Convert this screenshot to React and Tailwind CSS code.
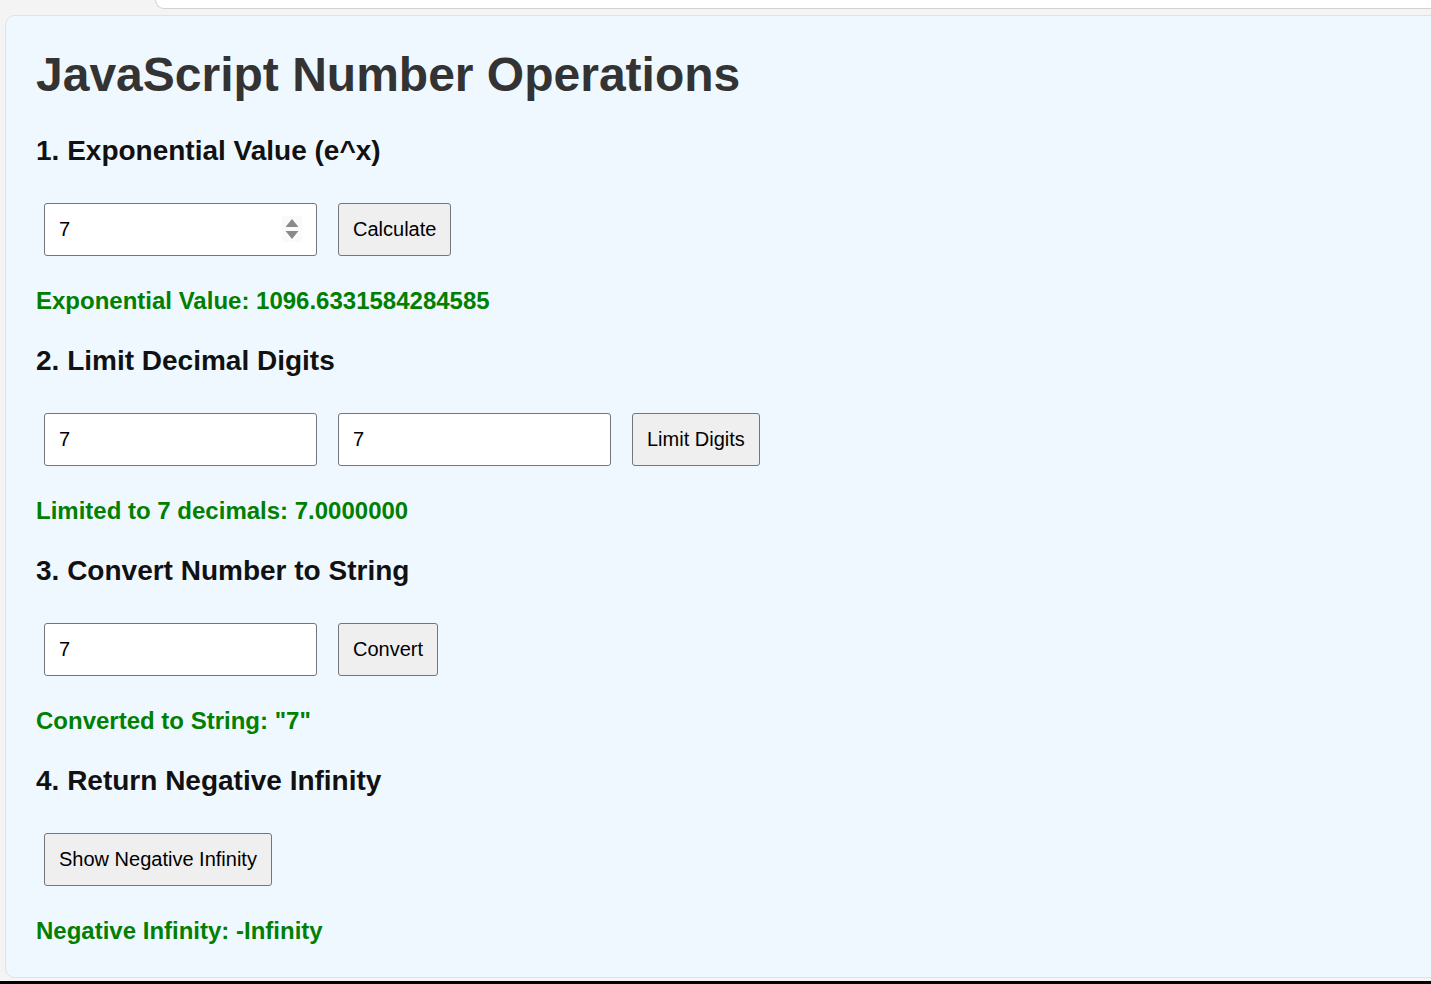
import React, { useState } from "react";

// Number ops demo card, rendered at the reference's 150% look
const Spinner = () => (
  <svg
    className="absolute right-[15px] top-[13px]"
    width="20"
    height="26"
    viewBox="0 0 20 26"
  >
    <rect x="0" y="0" width="20" height="26" fill="#fafafa" />
    <path d="M10 3 L16.5 11 L3.5 11 Z" fill="#8a8a8a" />
    <path d="M10 23 L16.5 15 L3.5 15 Z" fill="#8a8a8a" />
  </svg>
);

const Field = ({ value, onChange, spinner }) => (
  <div className="relative">
    <input
      type="text"
      value={value}
      onChange={(e) => onChange(e.target.value)}
      className="w-[273px] h-[53px] bg-white border border-[#767676] rounded-[3px] px-[14px] text-[20px] leading-[23px] text-black outline-none"
    />
    {spinner && <Spinner />}
  </div>
);

const Btn = ({ children, onClick }) => (
  <button
    onClick={onClick}
    className="h-[53px] bg-[#efefef] border border-[#767676] rounded-[3px] px-[14px] text-[20px] leading-[23px] text-black"
  >
    {children}
  </button>
);

const Heading = ({ children }) => (
  <h3 className="text-[28px] leading-[32px] font-bold text-[#111] mb-[36px]">{children}</h3>
);

const Result = ({ children }) => (
  <p className="text-[24px] leading-[28px] font-bold text-[#008000] mb-[30px]">{children}</p>
);

const Row = ({ children }) => (
  <div className="flex items-center gap-[21px] ml-[8px] mb-[31px]">{children}</div>
);

export default function App() {
  const [expIn, setExpIn] = useState("7");
  const [expOut, setExpOut] = useState(Math.exp(7));
  const [num, setNum] = useState("7");
  const [digits, setDigits] = useState("7");
  const [limited, setLimited] = useState({ d: 7, v: (7).toFixed(7) });
  const [convIn, setConvIn] = useState("7");
  const [convOut, setConvOut] = useState("7");
  const [negInf, setNegInf] = useState(-Infinity);

  return (
    <div
      className="w-[1431px] h-[984px] overflow-hidden bg-[#f4f4f4] flex flex-col"
      style={{ fontFamily: '"Liberation Sans", Arial, sans-serif' }}
    >
      {/* browser chrome leftover at the top */}
      <div className="h-[9px] shrink-0 flex">
        <div className="ml-[155px] flex-1 bg-white border-b border-l border-[#d2d2d2] rounded-bl-[16px]"></div>
      </div>

      <div className="mt-[6px] ml-[5px] w-[1460px] h-[963px] shrink-0 bg-[#f0f8ff] border border-[#e2e2e2] rounded-[10px] pt-[31px] pl-[30px] pr-[31px]">
        <h1 className="text-[48px] leading-[56px] font-bold text-[#333] mb-[32px]">
          JavaScript Number Operations
        </h1>

        <Heading>1. Exponential Value (e^x)</Heading>
        <Row>
          <Field value={expIn} onChange={setExpIn} spinner />
          <Btn onClick={() => setExpOut(Math.exp(Number(expIn)))}>Calculate</Btn>
        </Row>
        <Result>Exponential Value: {String(expOut)}</Result>

        <Heading>2. Limit Decimal Digits</Heading>
        <Row>
          <Field value={num} onChange={setNum} />
          <Field value={digits} onChange={setDigits} />
          <Btn
            onClick={() =>
              setLimited({ d: Number(digits), v: Number(num).toFixed(Number(digits)) })
            }
          >
            Limit Digits
          </Btn>
        </Row>
        <Result>
          Limited to {limited.d} decimals: {limited.v}
        </Result>

        <Heading>3. Convert Number to String</Heading>
        <Row>
          <Field value={convIn} onChange={setConvIn} />
          <Btn onClick={() => setConvOut(String(Number(convIn)))}>Convert</Btn>
        </Row>
        <Result>Converted to String: "{convOut}"</Result>

        <Heading>4. Return Negative Infinity</Heading>
        <Row>
          <Btn onClick={() => setNegInf(Number.NEGATIVE_INFINITY)}>Show Negative Infinity</Btn>
        </Row>
        <Result>Negative Infinity: {String(negInf)}</Result>
      </div>

      <div className="mt-[3px] h-[3px] shrink-0 bg-black"></div>
    </div>
  );
}
